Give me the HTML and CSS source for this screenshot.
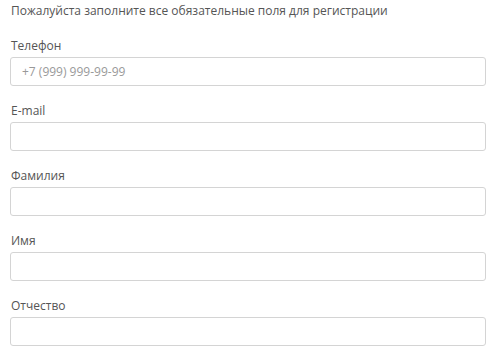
FILE: index.html
```html
<!DOCTYPE html>
<html lang="ru">
<head>
    <meta charset="UTF-8">
    <meta name="viewport" content="width=device-width, initial-scale=1.0">
    <title>Регистрация</title>
    <link rel="stylesheet" href="styles.css">
</head>
<body>
    <form class="reg-form">
        <p class="note">Пожалуйста заполните все обязательные поля для регистрации</p>

        <div class="field">
            <label for="phone">Телефон</label>
            <input type="text" id="phone" placeholder="+7 (999) 999-99-99">
        </div>
        <div class="field">
            <label for="email">E-mail</label>
            <input type="text" id="email">
        </div>
        <div class="field">
            <label for="lastname">Фамилия</label>
            <input type="text" id="lastname">
        </div>
        <div class="field">
            <label for="firstname">Имя</label>
            <input type="text" id="firstname">
        </div>
        <div class="field">
            <label for="middlename">Отчество</label>
            <input type="text" id="middlename">
        </div>
    </form>
</body>
</html>
```

FILE: styles.css
```css
/* General Styles */
body {
    font-family: "Open Sans", Arial, sans-serif;
    margin: 0;
    padding: 0;
    background-color: #fff;
    color: #555;
}

/* Registration form */
.reg-form {
    width: 476px;
    margin-left: 10px;
    padding-top: 2px;
}

.note {
    margin: 0 0 17px 1px;
    font-size: 12px;
    line-height: 18px;
}

.field {
    display: flex;
    flex-direction: column;
    gap: 2px;
    margin-bottom: 16px;
}

.field label {
    font-size: 12px;
    line-height: 18px;
    padding-left: 1px;
}

.field input {
    box-sizing: border-box;
    height: 29px;
    width: 100%;
    margin: 0;
    padding: 0 11px;
    border: 1px solid #d4d4d4;
    border-radius: 3px;
    font-family: "Open Sans", Arial, sans-serif;
    font-size: 12px;
    color: #555;
    outline: none;
}

.field input::placeholder {
    color: #999;
}
```
